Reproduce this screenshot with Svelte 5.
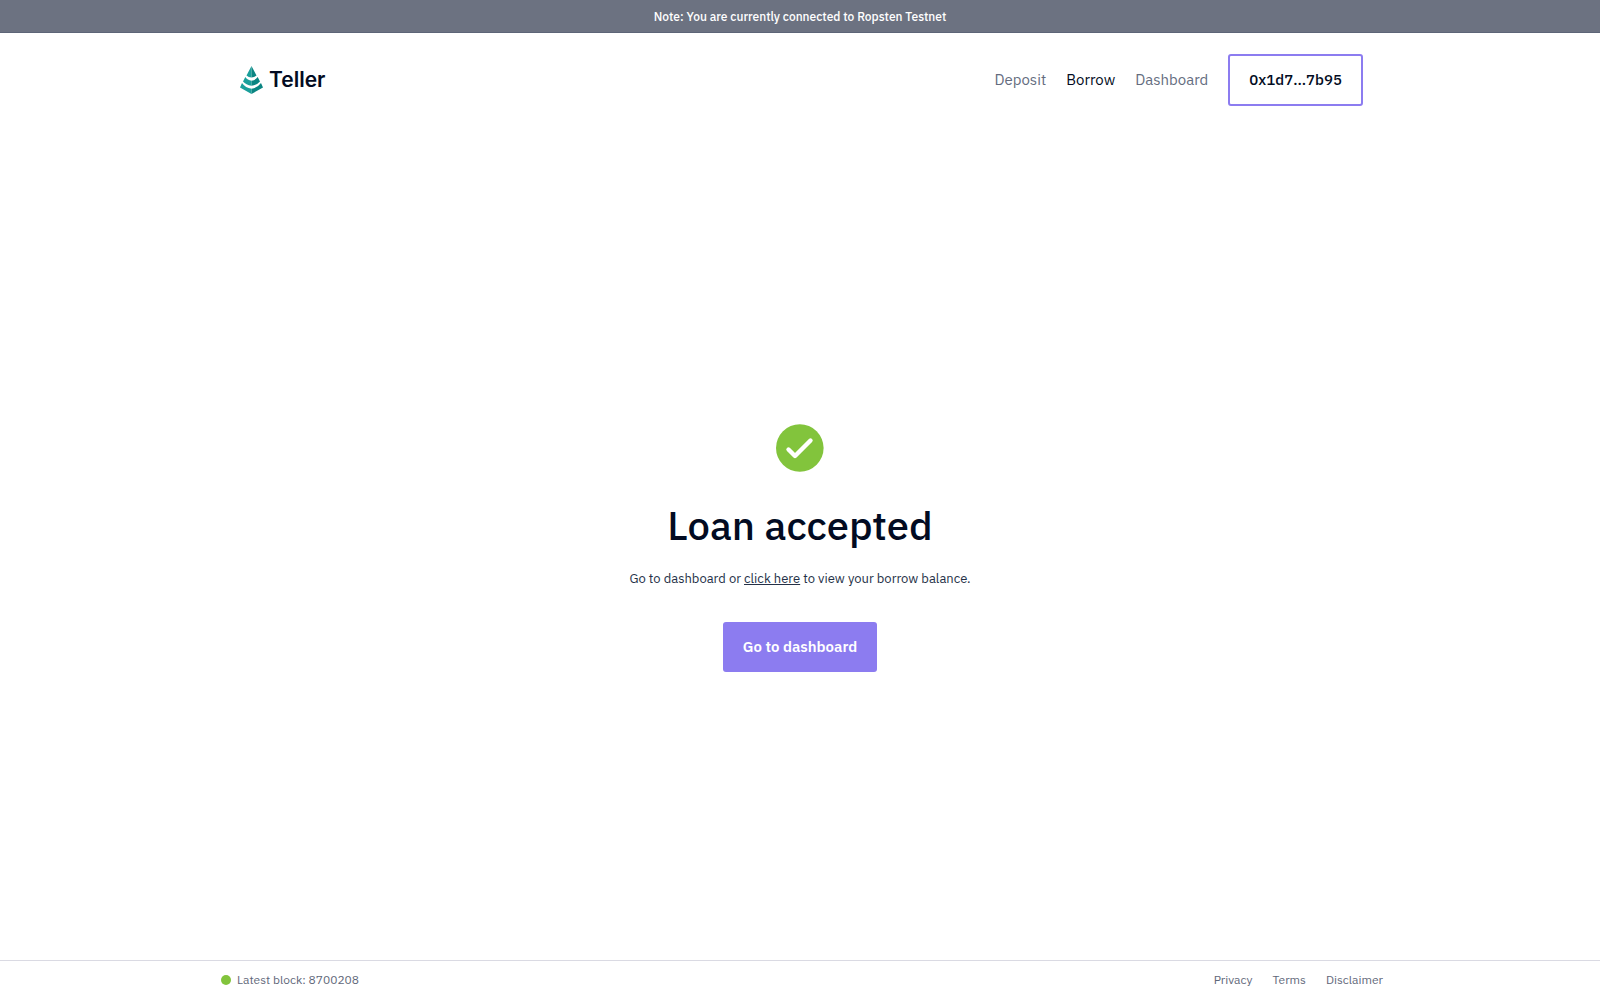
<script lang="ts">
	const network = 'Ropsten';
	const account = '0x1d7...7b95';
	const latestBlock = 8700208;

	const links = [
		{ label: 'Deposit', href: '#deposit' },
		{ label: 'Borrow', href: '#borrow' },
		{ label: 'Dashboard', href: '#dashboard' }
	];

	const legal = [
		{ label: 'Privacy', href: '#privacy' },
		{ label: 'Terms', href: '#terms' },
		{ label: 'Disclaimer', href: '#disclaimer' }
	];

	let current = $state('Borrow');

	function goToDashboard() {
		current = 'Dashboard';
	}
</script>

<svelte:head>
	<title>Teller</title>
</svelte:head>

<div class="page">
	<div class="notice">Note: You are currently connected to {network} Testnet</div>

	<header class="header container">
		<a class="logo" href="#home">
			<svg width="24" height="28" viewBox="0 0 24 28" aria-hidden="true">
				<path fill="#1a9f9b" d="M11.500 0 6.500 9.500Q8.500 11.300 11.500 11.500z" />
				<path fill="#0b8582" d="M11.500 0l5 9.500Q14.500 11.300 11.500 11.500z" />
				<path fill="#1a9f9b" d="M5.300 11Q7.500 14.300 11.500 14.700V19.700Q6 19 3 15.500z" />
				<path fill="#0b8582" d="M17.700 11Q15.500 14.300 11.500 14.700V19.700Q17 19 20 15.500z" />
				<path fill="#1a9f9b" d="M2 17Q5.500 22 11.500 22.700V28L0 21.500z" />
				<path fill="#0b8582" d="M21 17Q17.500 22 11.500 22.700V28l11.500-6.500z" />
			</svg>
			<span>Teller</span>
		</a>
		<nav class="nav">
			{#each links as link}
				<a href={link.href} class:active={current === link.label}>{link.label}</a>
			{/each}
			<button class="account">{account}</button>
		</nav>
	</header>

	<main class="main">
		<svg width="48" height="48" viewBox="0 0 48 48" aria-hidden="true">
			<circle cx="23.800" cy="24" r="23.800" fill="#82c43c" />
			<path
				d="M12.500 25.500l6.500 6.500L34.500 16.500"
				fill="none"
				stroke="#fff"
				stroke-width="4.400"
				stroke-linecap="round"
				stroke-linejoin="round"
			/>
		</svg>
		<h1>Loan accepted</h1>
		<p>Go to dashboard or <a href="#balance">click here</a> to view your borrow balance.</p>
		<button class="primary" onclick={goToDashboard}>Go to dashboard</button>
	</main>

	<footer class="footer">
		<div class="footer-content container">
			<div class="block"><span class="dot"></span>Latest block: {latestBlock}</div>
			<nav class="legal">
				{#each legal as item}
					<a href={item.href}>{item.label}</a>
				{/each}
			</nav>
		</div>
	</footer>
</div>

<style>
	.page {
		display: flex;
		flex-direction: column;
		min-height: 100vh;
		background-color: #fff;
		color: #020b22;
		font-family: 'IBM Plex Sans', Roboto, sans-serif;
	}

	.container {
		box-sizing: border-box;
		width: 100%;
		max-width: 1166px;
		margin: 0 auto;
	}

	.notice {
		padding: 9px 8px 7px;
		border-bottom: 1px solid #5d6577;
		background-color: #6c7281;
		color: #fff;
		font-size: 12px;
		font-weight: 500;
		line-height: 16px;
		text-align: center;
	}

	.header {
		display: flex;
		align-items: center;
		justify-content: space-between;
		padding: 21px 20px 20px;
	}

	.logo {
		display: flex;
		align-items: center;
		gap: 5px;
		padding-left: 3px;
		color: #020b22;
		font-family: Inter, sans-serif;
		font-size: 21px;
		font-weight: 600;
		line-height: 28px;
		text-decoration: none;
	}

	.nav {
		display: flex;
		align-items: center;
		gap: 20px;
		line-height: 20px;
	}

	.nav a {
		color: #646c7e;
		font-size: 15px;
		text-decoration: none;
	}

	.nav a.active {
		color: #020b22;
	}

	button {
		border-radius: 3px;
		font-family: inherit;
		font-size: 15px;
		line-height: 20px;
		cursor: pointer;
	}

	.account {
		padding: 14px 19px;
		border: 2px solid #8c7cf0;
		background-color: #fff;
		color: #020b22;
		font-weight: 500;
	}

	.main {
		display: flex;
		flex: 1;
		flex-direction: column;
		align-items: center;
		justify-content: center;
		padding-top: 10px;
	}

	h1 {
		margin: 27px 0 17px;
		font-size: 40px;
		font-weight: 500;
		line-height: 52px;
	}

	p {
		margin: 0 0 32px;
		color: #253147;
		font-size: 13px;
		line-height: 22px;
	}

	p a {
		color: inherit;
	}

	.primary {
		padding: 15px 20px;
		border: 0;
		background-color: #8c7cf0;
		color: #fff;
		font-weight: 600;
	}

	.footer {
		border-top: 1px solid #dadae3;
		color: #5f687a;
		font-size: 12px;
		line-height: 16px;
	}

	.footer-content {
		display: flex;
		align-items: center;
		justify-content: space-between;
		padding: 11px 0 12px 4px;
	}

	.block {
		display: flex;
		align-items: center;
		gap: 6px;
	}

	.dot {
		width: 10px;
		height: 10px;
		border-radius: 50%;
		background-color: #82c43c;
	}

	.legal {
		display: flex;
		gap: 20px;
	}

	.legal a {
		color: inherit;
		text-decoration: none;
	}
</style>
